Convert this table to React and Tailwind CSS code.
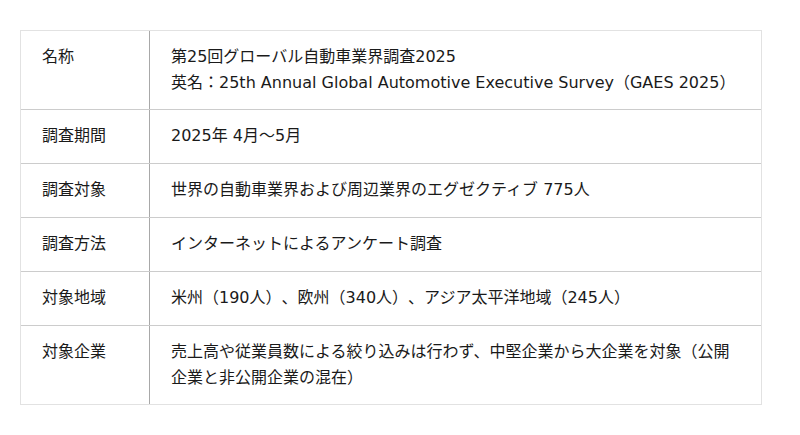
export default function App() {
    const rows = [
        { label: '名称', value: ['第25回グローバル自動車業界調査2025', '英名：25th Annual Global Automotive Executive Survey（GAES 2025）'] },
        { label: '調査期間', value: ['2025年 4月～5月'] },
        { label: '調査対象', value: ['世界の自動車業界および周辺業界のエグゼクティブ 775人'] },
        { label: '調査方法', value: ['インターネットによるアンケート調査'] },
        { label: '対象地域', value: ['米州（190人）、欧州（340人）、アジア太平洋地域（245人）'] },
        { label: '対象企業', value: ['売上高や従業員数による絞り込みは行わず、中堅企業から大企業を対象（公開', '企業と非公開企業の混在）'] },
    ];

    return (
        <div
            className="w-[800px] h-[435px] bg-white pt-[30px] pl-[20px]"
            style={{ fontFamily: '"DejaVu Sans", "Noto Sans CJK JP", sans-serif', textSpacingTrim: 'space-all' }}
        >
            <div className="w-[742px] border border-[#e2e2e2] text-[16px] text-[#1a1a1a]">
                {rows.map((row, i) => (
                    <div key={row.label} className={`flex ${i > 0 ? 'border-t border-[#cccccc]' : ''}`}>
                        <div className="w-[129px] shrink-0 border-r border-[#a8a8a8] pl-[21px] pt-[13px] pb-[13px] min-h-[53px]">
                            <div className="h-[26px] leading-[26px] whitespace-nowrap">{row.label}</div>
                        </div>
                        <div className="flex-1 pl-[21px] pr-[20px] pt-[13px] pb-[13px] min-h-[53px]">
                            {row.value.map((line) => (
                                <div key={line} className="h-[26px] leading-[26px] whitespace-nowrap">{line}</div>
                            ))}
                        </div>
                    </div>
                ))}
            </div>
        </div>
    );
}
